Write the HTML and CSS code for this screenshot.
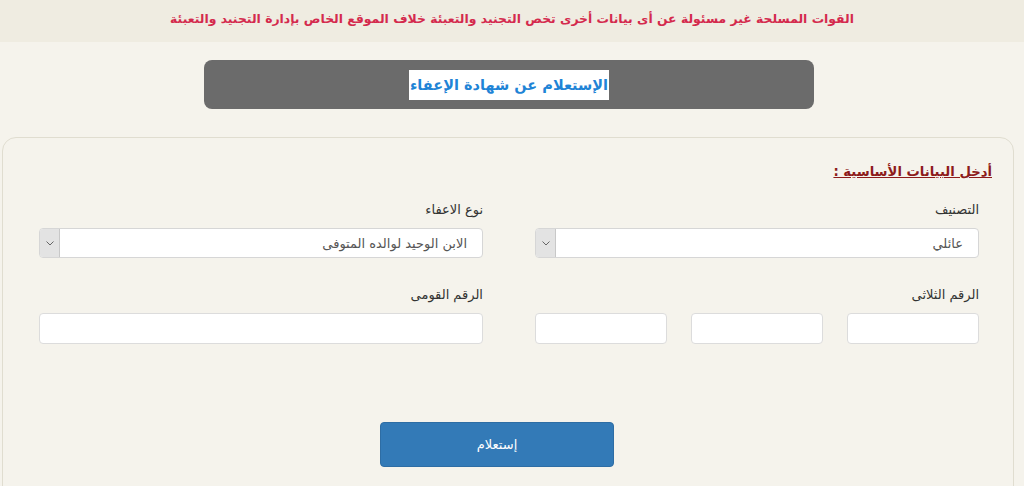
FILE: index.html
```html
<!DOCTYPE html>
<html lang="ar" dir="rtl">
<head>
<meta charset="utf-8">
<link rel="stylesheet" href="styles.css">
</head>
<body>
<div class="notice">القوات المسلحة غير مسئولة عن أى بيانات أخرى تخص التجنيد والتعبئة خلاف الموقع الخاص بإدارة التجنيد والتعبئة</div>
<div class="banner"><span class="banner-title">الإستعلام عن شهادة الإعفاء</span></div>
<div class="card">
  <div class="section-title">أدخل البيانات الأساسية :</div>
  <div class="row">
    <div class="field">
      <div class="label">التصنيف</div>
      <div class="select"><span class="select-text">عائلي</span><span class="arrow"><svg width="8" height="5" viewBox="0 0 8 5"><path d="M0.5 0.5 L4 4 L7.5 0.5" fill="none" stroke="#666" stroke-width="1"/></svg></span></div>
    </div>
    <div class="field">
      <div class="label">نوع الاعفاء</div>
      <div class="select"><span class="select-text">الابن الوحيد لوالده المتوفى</span><span class="arrow"><svg width="8" height="5" viewBox="0 0 8 5"><path d="M0.5 0.5 L4 4 L7.5 0.5" fill="none" stroke="#666" stroke-width="1"/></svg></span></div>
    </div>
  </div>
  <div class="row row2">
    <div class="field">
      <div class="label">الرقم الثلاثى</div>
      <div class="triple">
        <div class="input"></div>
        <div class="input"></div>
        <div class="input"></div>
      </div>
    </div>
    <div class="field">
      <div class="label">الرقم القومى</div>
      <div class="input"></div>
    </div>
  </div>
  <div class="actions"><div class="btn">إستعلام</div></div>
</div>
</body>
</html>
```
FILE: styles.css
```css
html, body {
  margin: 0;
  padding: 0;
  background: #f5f3ec;
  font-family: "DejaVu Sans", "Noto Sans", sans-serif;
  direction: rtl;
  overflow: hidden;
}
.notice {
  height: 42px;
  background: #efece1;
  color: #d42a4d;
  font-weight: bold;
  font-size: 12.4px;
  line-height: 38px;
  text-align: center;
}
.banner {
  width: 610px;
  height: 49px;
  margin: 18px 0 0 0;
  margin-right: 210px;
  background: #6b6b6b;
  border-radius: 8px;
  display: flex;
  align-items: center;
  justify-content: center;
}
.banner-title {
  background: #fff;
  color: #1f84d6;
  font-weight: bold;
  font-size: 14.5px;
  line-height: 30px;
  height: 30px;
  padding: 0 1px;
  margin-top: 1px;
}
.card {
  margin: 28px 10px 0 2px;
  border: 1px solid #e0ddd0;
  border-radius: 14px;
  padding: 24px 34px 40px 36px;
  background: #f5f3ec;
}
.section-title {
  color: #8d1b1b;
  font-weight: bold;
  font-size: 13.2px;
  line-height: 20px;
  text-decoration: underline;
  margin-right: -13px;
}
.row {
  display: grid;
  grid-template-columns: 444px 444px;
  column-gap: 52px;
  margin-top: 18px;
}
.row2 { margin-top: 27px; }
.label {
  font-size: 13px;
  color: #333;
  line-height: 20px;
  margin-bottom: 8px;
}
.select {
  height: 30px;
  box-sizing: border-box;
  background: #fff;
  border: 1px solid #d6d6d6;
  border-radius: 4px;
  display: flex;
  align-items: center;
  justify-content: space-between;
  overflow: hidden;
}
.select-text {
  font-size: 13px;
  color: #555;
  padding-right: 15px;
}
.arrow {
  width: 19px;
  height: 100%;
  background: #e3e3e3;
  border-right: 1px solid #c8c8c8;
  display: flex;
  align-items: center;
  justify-content: center;
}
.input {
  height: 31px;
  box-sizing: border-box;
  background: #fff;
  border: 1px solid #dcdcdc;
  border-radius: 4px;
}
.triple {
  display: grid;
  grid-template-columns: 132px 132px 132px;
  column-gap: 24px;
}
.actions {
  margin-top: 78px;
  display: flex;
}
.btn {
  width: 234px;
  height: 45px;
  margin-right: 365px;
  background: #337ab7;
  border: 1px solid #2e6da4;
  box-sizing: border-box;
  border-radius: 4px;
  color: #fff;
  font-size: 13px;
  display: flex;
  align-items: center;
  justify-content: center;
}
```
